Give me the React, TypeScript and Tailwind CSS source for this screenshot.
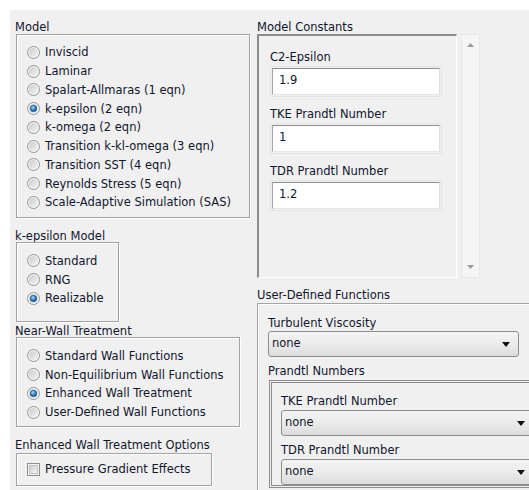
import React, { useId } from "react";

const FONT = { fontFamily: '"DejaVu Sans", Tahoma, sans-serif' };

function Radio({ checked }: { checked?: boolean }) {
  const id = useId().replace(/:/g, "");
  return (
    <svg width="13" height="13" viewBox="0 0 13 13" className="shrink-0">
      <defs>
        <linearGradient id={`r-o-${id}`} x1="0" y1="0" x2="1" y2="1">
          <stop offset="0" stopColor="#c9cacb" />
          <stop offset="1" stopColor="#f4f4f4" />
        </linearGradient>
        <radialGradient id={`r-b-${id}`} cx="0.4" cy="0.35" r="0.7">
          <stop offset="0" stopColor="#a9dcfa" />
          <stop offset="0.5" stopColor="#3c86c7" />
          <stop offset="1" stopColor="#174a8a" />
        </radialGradient>
      </defs>
      <circle cx="6.5" cy="6.5" r="6" fill="#f6f6f6" stroke="#929393" strokeWidth="1" />
      <circle cx="6.5" cy="6.5" r="4.5" fill={`url(#r-o-${id})`} />
      {checked && <circle cx="6.5" cy="6.5" r="3.3" fill={`url(#r-b-${id})`} stroke="#1b4f8e" strokeWidth="0.6" />}
    </svg>
  );
}

function Checkbox() {
  return (
    <svg width="13" height="13" viewBox="0 0 13 13" className="shrink-0">
      <defs>
        <linearGradient id="cb-fill" x1="0" y1="0" x2="1" y2="1">
          <stop offset="0" stopColor="#cbcbcb" />
          <stop offset="1" stopColor="#f7f7f7" />
        </linearGradient>
      </defs>
      <rect x="0.5" y="0.5" width="12" height="12" fill="#f4f4f4" stroke="#8f8f8f" />
      <rect x="2.5" y="2.5" width="8" height="8" fill="url(#cb-fill)" stroke="#c2c2c2" />
    </svg>
  );
}

function RadioRow({ label, checked }: { label: string; checked?: boolean }) {
  return (
    <div className="flex items-center h-[18.75px] gap-[5px] whitespace-nowrap">
      <Radio checked={checked} />
      <span className="pt-[1px]">{label}</span>
    </div>
  );
}

function DropArrow() {
  return (
    <svg width="8" height="5" viewBox="0 0 8 5" className="shrink-0">
      <path d="M0 0 H8 L4 5 Z" fill="#111" />
    </svg>
  );
}

function Combo({ w }: { w: string }) {
  return (
    <div
      className={`${w} h-[26px] rounded-[3px] border border-[#8d8d8d] bg-gradient-to-b from-[#f4f4f4] via-[#ebebeb] to-[#dcdcdc] flex items-center justify-between pl-[3px] pr-[8px]`}
    >
      <span>none</span>
      <DropArrow />
    </div>
  );
}

function NumInput({ value }: { value: string }) {
  return (
    <div className="w-[172px] h-[31px] border border-[#e4e4e4] rounded-[2px] p-[1px]">
      <div className="h-full bg-white border-t border-l border-t-[#8e8e8e] border-l-[#a6a6a6] border-r border-b border-r-[#dedede] border-b-[#e6e6e6] flex items-center pl-[6px] pb-[1px]">
        {value}
      </div>
    </div>
  );
}

const etched = "border border-[#a3a3a3] shadow-[inset_1px_1px_0_#ffffff,1px_1px_0_#ffffff]";
const caption = "h-[14px] leading-[16px] whitespace-nowrap";

export default function App() {
  return (
    <div className="w-[529px] h-[490px] bg-white pt-[10px] pl-[10px] overflow-hidden text-[11.5px] text-[#10162e]" style={FONT}>
      <div className="bg-[#f0f0f0] w-[519px] h-[480px] flex overflow-hidden">
        {/* left column */}
        <div className="w-[247px] shrink-0 flex flex-col">
          <div className={`ml-[5px] mt-[9px] ${caption}`}>Model</div>
          <div className={`ml-[6px] mt-[1px] w-[234px] h-[184px] ${etched} pt-[8px] pl-[10px]`}>
            <RadioRow label="Inviscid" />
            <RadioRow label="Laminar" />
            <RadioRow label="Spalart-Allmaras (1 eqn)" />
            <RadioRow label="k-epsilon (2 eqn)" checked />
            <RadioRow label="k-omega (2 eqn)" />
            <RadioRow label="Transition k-kl-omega (3 eqn)" />
            <RadioRow label="Transition SST (4 eqn)" />
            <RadioRow label="Reynolds Stress (5 eqn)" />
            <RadioRow label="Scale-Adaptive Simulation (SAS)" />
          </div>

          <div className={`ml-[5px] mt-[10px] ${caption}`}>k-epsilon Model</div>
          <div className={`ml-[6px] w-[103px] h-[80px] ${etched} pt-[8.5px] pl-[10px]`}>
            <RadioRow label="Standard" />
            <RadioRow label="RNG" />
            <RadioRow label="Realizable" checked />
          </div>

          <div className={`ml-[5px] mt-[1px] ${caption}`}>Near-Wall Treatment</div>
          <div className={`ml-[6px] w-[224px] h-[90px] ${etched} pt-[8.5px] pl-[10px]`}>
            <RadioRow label="Standard Wall Functions" />
            <RadioRow label="Non-Equilibrium Wall Functions" />
            <RadioRow label="Enhanced Wall Treatment" checked />
            <RadioRow label="User-Defined Wall Functions" />
          </div>

          <div className={`ml-[5px] mt-[10px] ${caption}`}>Enhanced Wall Treatment Options</div>
          <div className={`ml-[6px] mt-[2px] w-[196px] h-[33px] ${etched} pl-[10px] flex items-center gap-[5px]`}>
            <Checkbox />
            <span className="pt-[1px]">Pressure Gradient Effects</span>
          </div>
        </div>

        {/* right column */}
        <div className="flex-1 flex flex-col min-w-0">
          <div className={`mt-[9px] ${caption}`}>Model Constants</div>
          <div className="mt-[1px] flex gap-[4px]">
            <div className="w-[200px] h-[244px] border-l-2 border-t-2 border-l-[#8c8c8c] border-t-[#8c8c8c] border-r border-b border-r-white border-b-white pl-[11px] pt-[13px]">
              <div className={caption}>C2-Epsilon</div>
              <div className="mt-[3px]">
                <NumInput value="1.9" />
              </div>
              <div className={`mt-[9px] ${caption}`}>TKE Prandtl Number</div>
              <div className="mt-[3px]">
                <NumInput value="1" />
              </div>
              <div className={`mt-[9px] ${caption}`}>TDR Prandtl Number</div>
              <div className="mt-[3px]">
                <NumInput value="1.2" />
              </div>
            </div>
            {/* vertical scroll bar */}
            <div className="w-[19px] h-[244px] bg-[#f5f5f5] border border-[#e8e8e8] flex flex-col items-center justify-between py-[8px]">
              <svg width="7" height="4" viewBox="0 0 7 4">
                <path d="M0 4 L3.5 0 L7 4 Z" fill="#9a9a9a" />
              </svg>
              <svg width="7" height="4" viewBox="0 0 7 4">
                <path d="M0 0 H7 L3.5 4 Z" fill="#9a9a9a" />
              </svg>
            </div>
          </div>

          <div className={`mt-[9px] ${caption}`}>User-Defined Functions</div>
          <div className={`mt-[2px] w-[300px] h-[200px] shrink-0 ${etched} pt-[11px] pl-[10px]`}>
            <div className={caption}>Turbulent Viscosity</div>
            <div className="mt-[2px]">
              <Combo w="w-[251px]" />
            </div>
            <div className={`mt-[6px] ${caption}`}>Prandtl Numbers</div>
            <div className="mt-[3px] ml-[1px] w-[290px] h-[108px] border-[3px] border-double border-[#8c8c8c] border-r-0 pt-[10px] pl-[9px]">
              <div className={caption}>TKE Prandtl Number</div>
              <div className="mt-[3px]">
                <Combo w="w-[253px]" />
              </div>
              <div className={`mt-[6px] ${caption}`}>TDR Prandtl Number</div>
              <div className="mt-[3px]">
                <Combo w="w-[253px]" />
              </div>
            </div>
          </div>
        </div>
      </div>
    </div>
  );
}
